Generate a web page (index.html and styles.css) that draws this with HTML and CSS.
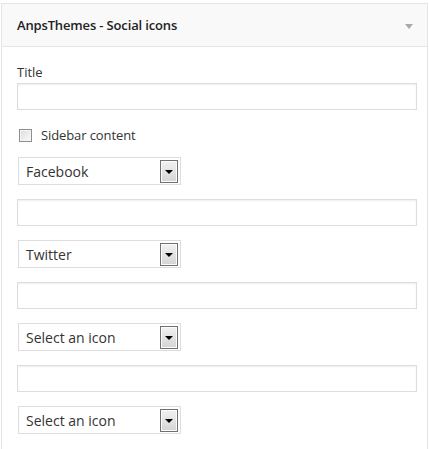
FILE: index.html
```html
<!DOCTYPE html>
<html>
<head>
<meta charset="utf-8">
<link rel="stylesheet" href="styles.css">
</head>
<body>
<div class="widget">
  <div class="widget-top">
    <h3 class="widget-title">AnpsThemes - Social icons</h3>
    <span class="toggle"></span>
  </div>
  <div class="widget-inside">
    <label class="field-label">Title</label>
    <div class="input"></div>
    <div class="check-row">
      <span class="checkbox"></span>
      <span class="check-label">Sidebar content</span>
    </div>
    <div class="select"><span class="select-text">Facebook</span><span class="select-btn"></span></div>
    <div class="input"></div>
    <div class="select"><span class="select-text">Twitter</span><span class="select-btn"></span></div>
    <div class="input"></div>
    <div class="select"><span class="select-text">Select an icon</span><span class="select-btn"></span></div>
    <div class="input"></div>
    <div class="select"><span class="select-text">Select an icon</span><span class="select-btn"></span></div>
  </div>
</div>
</body>
</html>
```

FILE: styles.css
```css
html, body {
  margin: 0;
  padding: 0;
  background: #fff;
}
body {
  font-family: "Open Sans", "Liberation Sans", sans-serif;
  color: #222;
  padding-top: 3px;
  padding-left: 1px;
}
.widget {
  width: 427px;
  box-sizing: border-box;
  border: 1px solid #e5e5e5;
  border-bottom: none;
  background: #fff;
}
.widget-top {
  height: 42px;
  background: #f9f9f9;
  border-bottom: 1px solid #e5e5e5;
  display: flex;
  align-items: center;
  justify-content: space-between;
  padding: 0 14px 0 15px;
}
.widget-title {
  margin: 0;
  font-size: 13px;
  font-weight: 600;
  color: #222;
  line-height: 17px;
  letter-spacing: -0.15px;
}
.toggle {
  width: 0;
  height: 0;
  border-left: 4px solid transparent;
  border-right: 4px solid transparent;
  border-top: 5px solid #aaa;
  margin-top: 2px;
}
.widget-inside {
  padding: 17px 15px 20px 15px;
  display: flex;
  flex-direction: column;
  align-items: flex-start;
}
.field-label {
  font-size: 13px;
  line-height: 17px;
  color: #333;
}
.input {
  margin-top: 2px;
  width: 400px;
  height: 27px;
  box-sizing: border-box;
  border: 1px solid #ddd;
  box-shadow: inset 0 1px 2px rgba(0,0,0,0.07);
  background: #fff;
}
.select + .input {
  margin-top: 14px;
}
.check-row {
  margin-top: 19px;
  height: 13px;
  display: flex;
  align-items: center;
  gap: 9px;
  padding-left: 2px;
}
.checkbox {
  width: 13px;
  height: 13px;
  box-sizing: border-box;
  border: 1px solid #8f8f8f;
  background: linear-gradient(135deg, #dcdcdc, #fbfbfb);
  box-shadow: inset 0 0 0 1px #f4f4f4;
}
.check-label {
  font-size: 13px;
  line-height: 17px;
  color: #333;
  letter-spacing: -0.1px;
}
.select {
  margin-top: 14px;
  margin-left: 1px;
  width: 163px;
  height: 28px;
  box-sizing: border-box;
  border: 1px solid #ddd;
  background: #fff;
  display: flex;
  align-items: center;
  justify-content: space-between;
  padding: 2px 2px 1px 7px;
}
.check-row + .select {
  margin-top: 15px;
}
.select-text {
  font-size: 14px;
  color: #333;
  line-height: 18px;
}
.select-btn {
  width: 18px;
  height: 23px;
  box-sizing: border-box;
  border: 1px solid #707070;
  background: linear-gradient(#f2f2f2, #d4d4d4);
  box-shadow: inset 0 0 0 1px #fcfcfc;
  display: flex;
  align-items: center;
  justify-content: center;
}
.select-btn::after {
  content: "";
  width: 0;
  height: 0;
  border-left: 4px solid transparent;
  border-right: 4px solid transparent;
  border-top: 4px solid #000;
  margin-top: 1px;
}
```
